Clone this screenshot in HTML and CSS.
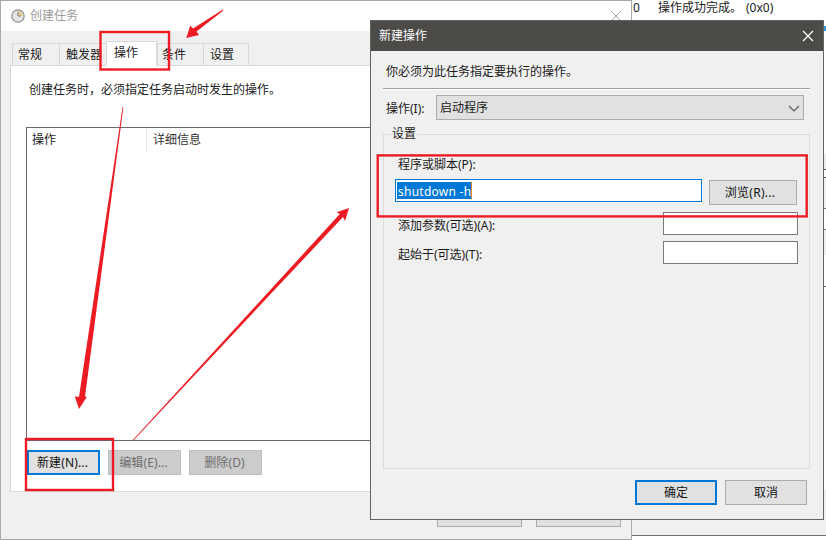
FILE: index.html
```html
<!DOCTYPE html>
<html lang="zh-CN">
<head>
<meta charset="utf-8">
<title>创建任务</title>
<link rel="stylesheet" href="styles.css">
</head>
<body>
<div class="desk">
  <section class="win-behind">
    <div class="result-row"><span class="result-code">0</span><span>操作成功完成。</span><span class="result-hex">(0x0)</span></div>
    <div class="strip">
      <i class="s-blue"></i><i class="s-a"></i><i class="s-b"></i><i class="s-c"></i><i class="s-d"></i><i class="s-e"></i><i class="s-f"></i>
    </div>
  </section>

  <section class="win-task">
    <header class="task-title">
      <svg class="clock" width="14" height="14" viewBox="0 0 14 14"><circle cx="7" cy="7" r="6.2" fill="#e4e4e2" stroke="#8f8f8f" stroke-width="1.2"/><path d="M7 2 A5 5 0 0 1 12 7 L7 7Z" fill="#e8cf8e"/><path d="M7 3.2V7H10" fill="none" stroke="#777" stroke-width="1"/></svg>
      <span>创建任务</span>
      <svg class="task-close" width="12" height="12" viewBox="0 0 12 12"><path d="M1 1L11 11M11 1L1 11" stroke="#a8a8a8" stroke-width="1"/></svg>
    </header>
    <nav class="tabs">
      <div class="tab">常规</div>
      <div class="tab">触发器</div>
      <div class="tab active">操作</div>
      <div class="tab">条件</div>
      <div class="tab">设置</div>
    </nav>
    <div class="panel">
      <p class="intro">创建任务时，必须指定任务启动时发生的操作。</p>
      <div class="list">
        <div class="list-head"><div class="col-a">操作</div><div class="col-b">详细信息</div></div>
      </div>
      <div class="list-actions">
        <button class="btn focus small">新建(N)...</button>
        <button class="btn off small">编辑(E)...</button>
        <button class="btn off small">删除(D)</button>
      </div>
    </div>
    <div class="task-footer"><button class="btn hidden-btn"></button><button class="btn hidden-btn"></button></div>
  </section>

  <section class="dialog">
    <header class="dlg-title">
      <span>新建操作</span>
      <svg width="12" height="12" viewBox="0 0 12 12"><path d="M1 1L11 11M11 1L1 11" stroke="#fff" stroke-width="1.2"/></svg>
    </header>
    <div class="dlg-body">
      <p class="dlg-intro">你必须为此任务指定要执行的操作。</p>
      <div class="rule"></div>
      <div class="op-row">
        <label class="op-label">操作(I):</label>
        <div class="select"><span>启动程序</span>
          <svg width="12" height="7" viewBox="0 0 12 7"><path d="M1 1L6 6L11 1" fill="none" stroke="#555" stroke-width="1.1"/></svg>
        </div>
      </div>
      <fieldset class="settings">
        <legend>设置</legend>
        <div class="field-label">程序或脚本(P):</div>
        <div class="prog-row">
          <div class="input focused"><span class="sel">shutdown -h</span></div>
          <button class="btn browse">浏览(R)...</button>
        </div>
        <div class="arg-row"><span>添加参数(可选)(A):</span><div class="input plain"></div></div>
        <div class="arg-row"><span>起始于(可选)(T):</span><div class="input plain"></div></div>
      </fieldset>
      <div class="dlg-actions">
        <button class="btn focus wide">确定</button>
        <button class="btn wide">取消</button>
      </div>
    </div>
  </section>

  <svg class="notes" width="826" height="540" viewBox="0 0 826 540">
    <g fill="none" stroke="#ed1c24" stroke-width="2.4">
      <rect x="100.5" y="32" width="68.5" height="37.5"/>
      <rect x="26" y="439" width="87" height="51"/>
      <rect x="377.7" y="155.4" width="429" height="61"/>
    </g>
    <g fill="#ed1c24">
      <polygon points="223,9.6 223.4,10.4 196.5,31.5 199,35 186.3,38 190.3,25.6 193,28.5"/>
      <polygon points="122.6,107 123.4,107 85,396.5 86.8,397 79,409 74.8,396.5 79,396.8"/>
      <polygon points="132.8,440 133.4,440.4 343,217 345,221 349,208 336.6,212.2 339.8,214"/>
    </g>
  </svg>
</div>
</body>
</html>
```
FILE: styles.css
```css
* { box-sizing: border-box; }
html, body { margin: 0; padding: 0; }
body {
  font-family: "Noto Sans", "Noto Sans CJK SC", sans-serif;
  font-size: 12px;
  line-height: 18px;
  color: #1a1a1a;
  background: #fff;
}
p { margin: 0; }

.desk { position: relative; width: 826px; height: 540px; overflow: hidden; background: #fff; }

/* window behind everything, right side */
.win-behind {
  position: absolute; left: 632px; top: 0; width: 194px; height: 536px;
  background: linear-gradient(#fff 0, #fff 490px, #f0f0f0 490px);
  border-bottom: 1px solid #6d6d6d;
}
.result-row { display: flex; height: 16px; line-height: 16px; padding-left: 1px; color: #222; }
.result-code { width: 25px; }
.result-hex { margin-left: 4px; }
.strip { position: absolute; left: 192px; top: 0; width: 2px; height: 490px; display: flex; flex-direction: column; }
.strip i { display: block; }
.s-blue { height: 5px; margin-top: 26px; background: #3a96dd; }
.s-a { height: 16px; margin-top: 123px; background: #ececec; border-bottom: 1px solid #555; }
.s-b { height: 8px; background: #fff; border-bottom: 1px solid #555; }
.s-c { height: 31px; background: #f0f0f0; border-bottom: 1px solid #777; }
.s-d { height: 21px; background: #fff; border-bottom: 1px solid #777; }
.s-e { height: 25px; background: #efefef; }
.s-f { height: 32px; background: #fff; border-bottom: 1px solid #666; }

/* task window */
.win-task {
  position: absolute; left: 0; top: 0; width: 632px; height: 540px;
  background: #f0f0f0; border: 1px solid #a9a9a9;
  display: flex; flex-direction: column;
}
.task-title {
  height: 30px; background: #fff; color: #9b9b9b;
  display: flex; align-items: center; gap: 5px; padding: 0 9px 0 10px;
}
.task-close { margin-left: auto; }
.tabs { display: flex; padding-left: 11px; height: 34px; align-items: flex-end; }
.tab {
  width: 47px; height: 22px; padding: 2px 0 0 6px;
  background: #f0f0f0; border: 1px solid #d9d9d9; border-bottom: 0; border-right: 0;
}
.tab:nth-child(1) { padding-left: 5px; }
.tab:nth-child(4) { width: 46px; padding-left: 4px; }
.tab:nth-child(5) { width: 46px; border-right: 1px solid #d9d9d9; }
.tab.active {
  width: 51px; height: 25px; padding: 2px 0 0 7px; margin-bottom: -1px;
  background: #fff; border-right: 1px solid #d9d9d9;
  position: relative; z-index: 1;
}
.panel {
  margin-left: 9px; width: 612px; height: 427px;
  background: #fff; border: 1px solid #d9d9d9;
  padding: 15px 15px 0;
  display: flex; flex-direction: column;
}
.intro { height: 18px; padding-left: 3px; color: #222; }
.list { margin-top: 28px; height: 314px; border: 1px solid #696969; }
.list-head { display: flex; height: 24px; line-height: 24px; }
.col-a { width: 120px; padding-left: 5px; border-right: 1px solid #e5e5e5; }
.col-b { padding-left: 6px; color: #333; }
.list-actions { display: flex; gap: 8px; margin-top: 9px; padding-left: 1px; }

.btn {
  font: inherit; color: #111; background: #e1e1e1;
  border: 1px solid #adadad; padding: 0; height: 25px;
}
.small { width: 73px; letter-spacing: .15px; padding-right: 2px; }
.focus { border: 2px solid #0078d7; }
.off { background: #ccc; border-color: #bfbfbf; color: #6d6d6d; }
.task-footer { display: flex; justify-content: flex-end; gap: 14px; padding-right: 10px; margin-top: 10px; }
.hidden-btn { width: 85px; }

/* dialog */
.dialog {
  position: absolute; left: 370px; top: 20px; width: 454px; height: 500px;
  background: #f0f0f0; border: 1px solid #646464;
  display: flex; flex-direction: column;
}
.dlg-title {
  height: 30px; flex: none; background: #4d4b48; color: #fff;
  display: flex; align-items: center; justify-content: space-between; padding: 0 9px 0 8px;
}
.dlg-body { flex: 1; padding: 0 13px 0 12px; display: flex; flex-direction: column; }
.dlg-intro { margin-top: 12px; padding-left: 3px; height: 18px; }
.rule { margin-top: 7px; height: 2px; border-top: 1px solid #a0a0a0; border-bottom: 1px solid #fff; }
.op-row { display: flex; align-items: center; margin-top: 5px; height: 25px; padding-left: 3px; padding-right: 6px; }
.op-label { width: 50px; padding-top: 2px; }
.select {
  flex: 1; height: 25px; background: #e1e1e1; border: 1px solid #adadad;
  display: flex; align-items: center; justify-content: space-between; padding: 1px 3px 0 3px;
}
.settings {
  margin: 5px 0 0; min-width: 0; height: 344px; padding: 0 12px 0 11px;
  border: 1px solid #dcdcdc;
}
.settings legend { padding: 0 1px; margin-left: -4px; height: 18px; }
.field-label { margin-top: 13px; padding-left: 3px; height: 18px; }
.prog-row { display: flex; gap: 7px; margin-top: 5px; height: 26px; }
.input { background: #fff; border: 1px solid #7a7a7a; }
.focused { width: 307px; height: 23px; border-color: #0078d7; padding: 2px 0 0 1px; line-height: 19px; letter-spacing: .25px; }
.sel { display: inline-block; background: #0078d7; color: #fff; height: 17px; border-right: 1px solid #e88a2c; padding-left: 1px; white-space: nowrap; vertical-align: top; }
.browse { width: 88px; height: 25px; margin-top: 1px; letter-spacing: .3px; padding-right: 6px; }
.arg-row { display: flex; justify-content: space-between; margin-top: 6px; margin-right: -1px; padding-left: 3px; height: 23px; align-items: center; }
.prog-row + .arg-row { margin-top: 7px; }
.arg-row span { padding-top: 4px; }
.plain { width: 135px; height: 23px; }
.dlg-actions { display: flex; justify-content: flex-end; gap: 8px; margin-top: 11px; padding-right: 3px; }
.wide { width: 82px; }

.notes { position: absolute; left: 0; top: 0; pointer-events: none; }
```
